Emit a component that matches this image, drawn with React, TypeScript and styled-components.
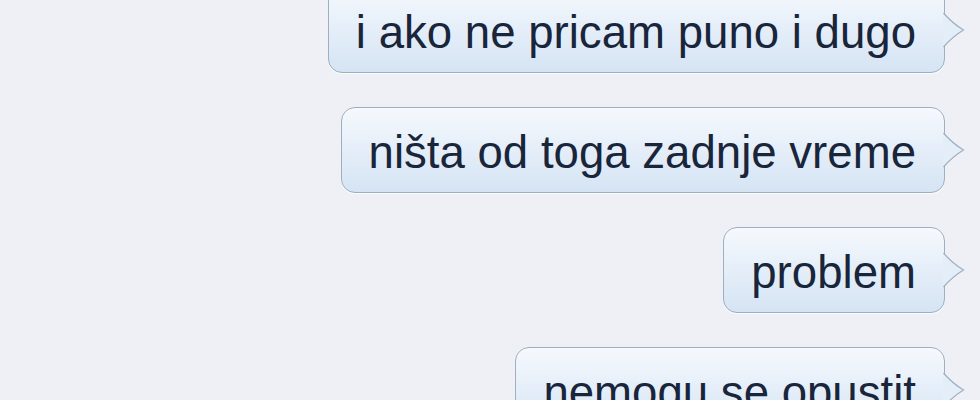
import styled, { createGlobalStyle } from "styled-components";

const GlobalStyle = createGlobalStyle`
  html, body {
    margin: 0;
    padding: 0;
    background: #eff0f5;
    overflow: hidden;
  }
`;

const Thread = styled.div`
  width: 980px;
  height: 400px;
  overflow: hidden;
  box-sizing: border-box;
  padding-right: 35px;
  display: flex;
  flex-direction: column;
  align-items: flex-end;
  gap: 34px;
  font-family: "Liberation Sans", Arial, sans-serif;
`;

const Bubble = styled.div<{ $first?: boolean }>`
  position: relative;
  flex-shrink: 0;
  box-sizing: border-box;
  height: 86px;
  margin-top: ${(p) => (p.$first ? "-13px" : "0")};
  padding: 5px 28px 0 27px;
  line-height: 79px;
  font-size: 45.6px;
  color: #19253a;
  white-space: nowrap;
  border: 1px solid #9eafc2;
  border-radius: 14px;
  background: linear-gradient(#f6f9fd 0%, #e6eff9 45%, #d5e4f4 100%);
  box-shadow: 0 1px 1px rgba(255, 255, 255, 0.8);
`;

const TailSvg = styled.svg`
  position: absolute;
  right: -21px;
  top: 50%;
  margin-top: -18px;
  width: 22px;
  height: 36px;
  overflow: visible;
`;

function Tail() {
  return (
    <TailSvg viewBox="0 0 22 36">
      <path d="M0 1 Q9 11 20.5 18 Q9 25 0 35 Z" fill="#e4eef8" />
      <path
        d="M0.5 1 Q9 11 20.5 18 Q9 25 0.5 35"
        fill="none"
        stroke="#9eafc2"
        strokeWidth="1.2"
      />
    </TailSvg>
  );
}

const messages = [
  "i ako ne pricam puno i dugo",
  "ništa od toga zadnje vreme",
  "problem",
  "nemogu se opustit",
];

export default function App() {
  return (
    <>
      <GlobalStyle />
      <Thread>
        {messages.map((m, i) => (
          <Bubble key={i} $first={i === 0}>
            {m}
            <Tail />
          </Bubble>
        ))}
      </Thread>
    </>
  );
}
